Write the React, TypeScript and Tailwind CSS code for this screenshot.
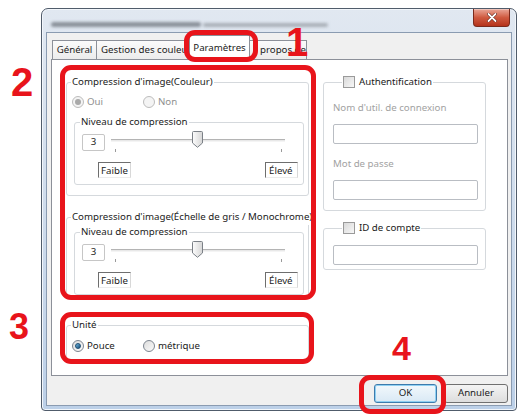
import React from "react";

type Kids = { children?: React.ReactNode };

function Radio({ checked, disabled }: { checked?: boolean; disabled?: boolean }) {
  return (
    <span
      className={
        disabled
          ? "inline-flex shrink-0 w-[12px] h-[12px] items-center justify-center rounded-full border border-[#bcbcbc] bg-[#f4f4f4]"
          : "inline-flex shrink-0 w-[12px] h-[12px] items-center justify-center rounded-full border border-[#7d8590] bg-gradient-to-br from-[#dcdcdc] to-[#fafafa]"
      }
    >
      {checked && (
        <span
          className={
            disabled
              ? "w-[6px] h-[6px] rounded-full bg-[#a9a9a9]"
              : "w-[6px] h-[6px] rounded-full bg-gradient-to-br from-[#6fb6e0] to-[#1b4f78] border border-[#1d4e73]"
          }
        />
      )}
    </span>
  );
}

function Check() {
  return (
    <span className="inline-block shrink-0 w-[12px] h-[12px] border border-[#9a9a9a] bg-gradient-to-br from-[#d9d9d9] to-[#f7f7f7]" />
  );
}

function Group({
  legend,
  className,
  legendClass,
  children,
}: Kids & { legend: React.ReactNode; className?: string; legendClass?: string }) {
  return (
    <fieldset className={`border border-[#d5d9dd] rounded-[3px] min-w-0 ${className ?? ""}`}>
      <legend className={`px-[1px] leading-[16px] whitespace-nowrap ${legendClass ?? "ml-[4px]"}`}>{legend}</legend>
      {children}
    </fieldset>
  );
}

function Thumb() {
  return (
    <svg width="11" height="17" viewBox="0 0 11 17" className="absolute left-[81px] top-[1px]">
      <defs>
        <linearGradient id="thumbFill" x1="0" y1="0" x2="1" y2="0">
          <stop offset="0" stopColor="#fdfdfd" />
          <stop offset="1" stopColor="#d6d6d6" />
        </linearGradient>
      </defs>
      <path
        d="M1.5 0.5 H9.5 Q10.5 0.5 10.5 1.5 V12 L5.5 16.3 L0.5 12 V1.5 Q0.5 0.5 1.5 0.5 Z"
        fill="url(#thumbFill)"
        stroke="#7b8087"
      />
    </svg>
  );
}

function Slider() {
  return (
    <div className="relative w-[174px] h-[22px] ml-[6px]">
      <div className="absolute left-0 right-0 top-[9px] h-[3px] border-t border-[#b4b4b4] border-b border-b-[#f4f4f4] bg-[#e8e8e8]" />
      <Thumb />
      <div className="absolute left-[4px] top-[19px] w-[1px] h-[3px] bg-[#9a9a9a]" />
      <div className="absolute left-[170px] top-[19px] w-[1px] h-[3px] bg-[#9a9a9a]" />
    </div>
  );
}

function Level() {
  return (
    <Group legend="Niveau de compression" legendClass="ml-[5px]" className="ml-[7px] mr-[4px] pb-[6px]">
      <div className="flex items-start pl-[7px]">
        <div className="mt-[4px] w-[23px] h-[17px] border border-[#c6c6c6] rounded-[2px] bg-white flex items-center justify-center">
          3
        </div>
        <Slider />
      </div>
      <div className="flex justify-between pl-[23px] pr-[5px] mt-[10px]">
        <span className="w-[33px] h-[16px] pl-[2px] leading-[15px] border-l border-t border-[#6e6e6e] border-r border-b border-r-[#d8d8d8] border-b-[#ececec]">
          Faible
        </span>
        <span className="w-[33px] h-[16px] pl-[3px] leading-[15px] border-l border-t border-[#6e6e6e] border-r border-b border-r-[#d8d8d8] border-b-[#ececec]">
          Élevé
        </span>
      </div>
    </Group>
  );
}

function RedFrame({ className }: { className: string }) {
  return (
    <div
      className={`absolute pointer-events-none border-[5px] border-[#e8141b] rounded-[11px] ${className}`}
    />
  );
}

function Tab({ label, className }: { label: string; className: string }) {
  return (
    <div
      className={`h-[19px] border border-b-0 border-[#8c9099] bg-gradient-to-b from-[#fbfbfb] to-[#ececec] whitespace-nowrap overflow-hidden leading-[18px] ${className}`}
    >
      {label}
    </div>
  );
}

export default function App() {
  return (
    <div className="relative w-[521px] h-[417px] overflow-hidden bg-white text-[9.7px] text-[#1b1b1b] [font-family:'Noto_Sans',sans-serif]">
      <div className="pt-[8px] pl-[41px]">
        {/* dialog window */}
        <div className="w-[476px] h-[403px] rounded-t-[7px] rounded-b-[4px] border border-[#505c6b] bg-gradient-to-b from-[#e1e8f1] via-[#cfdcec] to-[#bcd0e8] shadow-[inset_0_0_0_1px_#f2f6fb]">
          {/* title bar */}
          <div className="relative h-[23px] flex justify-between">
            <div className="mt-[8px] ml-[9px] flex items-center gap-[2px] blur-[1.6px]">
              <div className="w-[150px] h-[5px] rounded-full bg-[#8a919a]" />
              <div className="w-[125px] h-[4px] rounded-full bg-[#a9afb7]" />
            </div>
            <div className="mr-[6px] w-[37px] h-[18px] rounded-b-[4px] border border-t-0 border-[#7a2a1c] bg-gradient-to-b from-[#e9a697] via-[#cf5a40] to-[#b4321a] flex items-center justify-center shadow-[inset_0_1px_0_rgba(255,255,255,0.35)]">
              <svg width="10" height="9" viewBox="0 0 10 9">
                <path d="M1.5 1 L8.5 8 M8.5 1 L1.5 8" stroke="#5a1a10" strokeWidth="3" strokeLinecap="round" />
                <path d="M1.5 1 L8.5 8 M8.5 1 L1.5 8" stroke="#ffffff" strokeWidth="1.8" strokeLinecap="round" />
              </svg>
            </div>
          </div>

          {/* client area */}
          <div className="mx-[4px] h-[374px] border border-[#8a9bb1] bg-[#f0f0f0] flex flex-col">
            {/* tabs */}
            <div className="mt-[2px] pl-[5px] h-[24px] flex items-end">
              <Tab label="Général" className="w-[45px] text-center" />
              <Tab label="Gestion des couleurs" className="-ml-[1px] w-[96px] pl-[4px]" />
              <div className="relative z-10 -ml-[3px] w-[61px] h-[25px] -mb-[1px] border border-b-0 border-[#8c9099] bg-white text-center leading-[24px]">
                Paramètres
                <RedFrame className="left-[-6px] top-[-6px] right-[-9px] bottom-[-2px]" />
              </div>
              <Tab label="propos de" className="-ml-[1px] w-[58px] pl-[10px]" />
            </div>

            {/* tab page */}
            <div className="mr-[3px] ml-[4px] h-[317px] border border-[#8c9099] bg-white flex">
              {/* left column */}
              <div className="ml-[14px] mt-[14px] w-[243px] flex flex-col">
                <div className="relative">
                  <Group legend="Compression d'image(Couleur)" className="pb-[10px]">
                    <div className="mt-[4px] h-[16px] pl-[5px] flex items-center text-[#8f8f8f]">
                      <span className="w-[71px] flex items-center gap-[3px]">
                        <Radio checked disabled />
                        Oui
                      </span>
                      <span className="flex items-center gap-[3px]">
                        <Radio disabled />
                        Non
                      </span>
                    </div>
                    <div className="mt-[4px]">
                      <Level />
                    </div>
                  </Group>
                  <Group legend="Compression d'image(Échelle de gris / Monochrome)" className="mt-[13px] pb-[4px]">
                    <div className="-mt-[1px]">
                      <Level />
                    </div>
                  </Group>
                  <RedFrame className="left-[-6px] top-[-9px] right-[-7px] bottom-[0px]" />
                </div>

                <div className="relative mt-[17px]">
                  <Group legend="Unité" className="pb-[6px]">
                    <div className="mt-[5px] h-[16px] pl-[5px] flex items-center">
                      <span className="w-[71px] flex items-center gap-[3px]">
                        <Radio checked />
                        Pouce
                      </span>
                      <span className="flex items-center gap-[3px]">
                        <Radio />
                        métrique
                      </span>
                    </div>
                  </Group>
                  <RedFrame className="left-[-6px] top-[-5px] right-[-5px] bottom-[-3px]" />
                </div>
              </div>

              {/* right column */}
              <div className="ml-[14px] mt-[14px] w-[163px] flex flex-col">
                <Group
                  legend={
                    <span className="flex items-center gap-[4px]">
                      <Check />
                      Authentification
                    </span>
                  }
                  legendClass="ml-[9px]"
                  className="pl-[9px] pb-[10px]"
                >
                  <div className="mt-[10px] leading-[16px] text-[#a2a2a2]">Nom d'util. de connexion</div>
                  <div className="mt-[8px] w-[145px] h-[20px] border border-[#b9bdc3] rounded-[2px] bg-white" />
                  <div className="mt-[12px] leading-[16px] text-[#a2a2a2]">Mot de passe</div>
                  <div className="mt-[8px] w-[145px] h-[20px] border border-[#b9bdc3] rounded-[2px] bg-white" />
                </Group>
                <Group
                  legend={
                    <span className="flex items-center gap-[4px]">
                      <Check />
                      ID de compte
                    </span>
                  }
                  legendClass="ml-[9px]"
                  className="mt-[9px] pl-[9px] pb-[4px]"
                >
                  <div className="mt-[9px] w-[145px] h-[20px] border border-[#b9bdc3] rounded-[2px] bg-white" />
                </Group>
              </div>
            </div>

            {/* buttons */}
            <div className="mt-[8px] pr-[3px] flex justify-end gap-[7px]">
              <div className="relative">
                <div className="w-[63px] h-[19px] rounded-[3px] border border-[#3d7bad] bg-gradient-to-b from-[#f2f8fc] to-[#d9e9f5] shadow-[inset_0_0_0_1px_#8fd0f2] flex items-center justify-center">
                  OK
                </div>
                <RedFrame className="left-[-15px] top-[-9px] right-[-9px] bottom-[-11px]" />
              </div>
              <div className="w-[64px] h-[19px] rounded-[3px] border border-[#707070] bg-gradient-to-b from-[#f4f4f4] to-[#dddddd] flex items-center justify-center">
                Annuler
              </div>
            </div>
          </div>
        </div>
      </div>

      {/* step numbers */}
      <div className="absolute left-[286px] top-[22px] text-[40px] leading-none font-bold text-[#e8141b] [font-family:'Liberation_Sans',Arial,sans-serif]">
        1
      </div>
      <div className="absolute left-[11px] top-[62px] text-[40px] leading-none font-bold text-[#e8141b] [font-family:'Liberation_Sans',Arial,sans-serif]">
        2
      </div>
      <div className="absolute left-[9px] top-[309px] text-[36px] leading-none font-bold text-[#e8141b] [font-family:'Liberation_Sans',Arial,sans-serif]">
        3
      </div>
      <div className="absolute left-[392px] top-[331px] text-[34px] leading-none font-bold text-[#e8141b] [font-family:'Liberation_Sans',Arial,sans-serif]">
        4
      </div>
    </div>
  );
}
